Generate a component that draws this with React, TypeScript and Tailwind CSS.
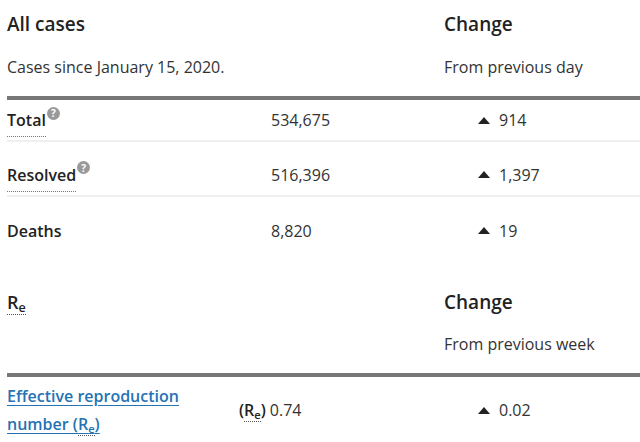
import React from 'react';

const UpArrow: React.FC = () => (
  <svg width="12" height="7" viewBox="0 0 12 7" className="mr-[9px] shrink-0">
    <polygon points="6,0 12,7 0,7" fill="#222" />
  </svg>
);

const Help: React.FC = () => (
  <span className="relative -top-[9px] ml-[1px] inline-flex h-[13px] w-[13px] items-center justify-center rounded-full bg-[#999] text-[10px] font-bold leading-none text-white">
    ?
  </span>
);

const Change: React.FC<{ value: string }> = ({ value }) => (
  <div className="flex items-center pl-[34px]">
    <UpArrow />
    <span>{value}</span>
  </div>
);

const Re: React.FC = () => (
  <span className="border-b border-dotted border-[#555]">
    R<sub className="text-[0.7em]">e</sub>
  </span>
);

export default function App() {
  return (
    <div className="min-h-[442px] overflow-hidden bg-white pl-[7px] font-['Open_Sans',sans-serif] text-[16px] text-[#333]">
      {/* All cases header */}
      <div className="grid grid-cols-[437px_1fr]">
        <div>
          <div className="pt-[10px] text-[19px] font-semibold leading-[28px] text-[#222]">All cases</div>
          <div className="pt-[17px] leading-[24px]">Cases since January 15, 2020.</div>
        </div>
        <div>
          <div className="pt-[10px] text-[19px] font-semibold leading-[28px] text-[#222]">Change</div>
          <div className="pt-[17px] leading-[24px]">From previous day</div>
        </div>
      </div>
      <div className="mt-[17px] h-[4px] bg-[#777]" />

      {/* Rows */}
      <div className="grid h-[42px] grid-cols-[264px_173px_1fr] items-center border-b-2 border-[#efefef]">
        <div className="font-semibold text-[#222]">
          <span className="border-b border-dotted border-[#777] pb-[5px]">Total</span>
          <Help />
        </div>
        <div>534,675</div>
        <Change value="914" />
      </div>
      <div className="grid h-[55px] grid-cols-[264px_173px_1fr] items-center border-b-2 border-[#efefef] pt-[12px]">
        <div className="font-semibold text-[#222]">
          <span className="border-b border-dotted border-[#777] pb-[5px]">Resolved</span>
          <Help />
        </div>
        <div>516,396</div>
        <Change value="1,397" />
      </div>
      <div className="grid h-[55px] grid-cols-[264px_173px_1fr] items-center pt-[12px]">
        <div className="font-semibold text-[#222]">Deaths</div>
        <div>8,820</div>
        <Change value="19" />
      </div>

      {/* Re header */}
      <div className="grid grid-cols-[437px_1fr] pt-[36px]">
        <div className="text-[18px] font-semibold leading-[28px] text-[#222]">
          <Re />
        </div>
        <div>
          <div className="text-[19px] font-semibold leading-[28px] text-[#222]">Change</div>
          <div className="pt-[16px] leading-[24px]">From previous week</div>
        </div>
      </div>
      <div className="mt-[17px] h-[4px] bg-[#777]" />

      <div className="grid grid-cols-[232px_205px_1fr] items-center pt-[5px]">
        <div className="font-semibold leading-[28px] text-[#2572b4] underline underline-offset-[3px]">
          Effective reproduction number (<Re />)
        </div>
        <div className="flex">
          <span className="mr-[4px] font-semibold text-[#222]">
            (<Re />)
          </span>
          <span>0.74</span>
        </div>
        <Change value="0.02" />
      </div>
    </div>
  );
}
